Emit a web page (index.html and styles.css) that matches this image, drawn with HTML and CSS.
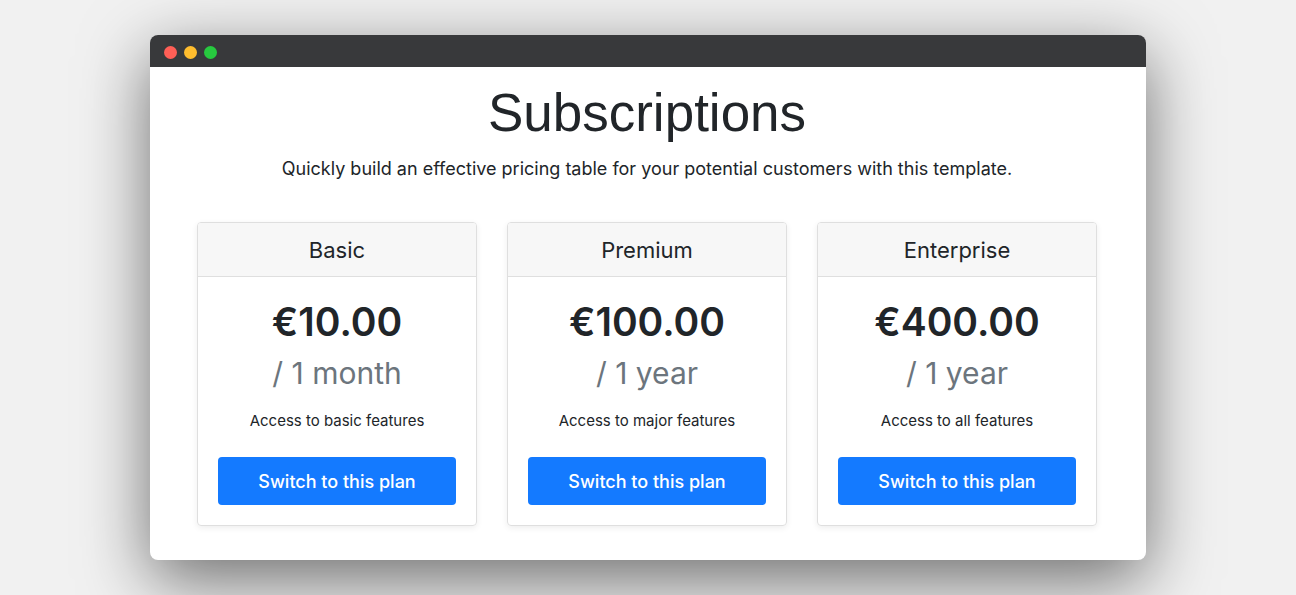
FILE: index.html
```html
<!DOCTYPE html>
<html lang="en">
<head>
<meta charset="utf-8">
<title>Subscriptions</title>
<link rel="stylesheet" href="styles.css">
</head>
<body>
<div class="window">
  <div class="titlebar">
    <span class="dot dot-close"></span>
    <span class="dot dot-minimize"></span>
    <span class="dot dot-zoom"></span>
  </div>
  <main class="content">
    <header class="intro">
      <h1 class="title">Subscriptions</h1>
      <p class="lead">Quickly build an effective pricing table for your potential customers with this template.</p>
    </header>
    <div class="plans">
      <section class="card">
        <h2 class="card-header">Basic</h2>
        <div class="card-body">
          <p class="price">€10.00</p>
          <p class="period">/ 1 month</p>
          <p class="features">Access to basic features</p>
          <button class="btn" type="button">Switch to this plan</button>
        </div>
      </section>
      <section class="card">
        <h2 class="card-header">Premium</h2>
        <div class="card-body">
          <p class="price">€100.00</p>
          <p class="period">/ 1 year</p>
          <p class="features">Access to major features</p>
          <button class="btn" type="button">Switch to this plan</button>
        </div>
      </section>
      <section class="card">
        <h2 class="card-header">Enterprise</h2>
        <div class="card-body">
          <p class="price">€400.00</p>
          <p class="period">/ 1 year</p>
          <p class="features">Access to all features</p>
          <button class="btn" type="button">Switch to this plan</button>
        </div>
      </section>
    </div>
  </main>
</div>
</body>
</html>
```
FILE: styles.css
```css
* {
  box-sizing: border-box;
}

body {
  margin: 0;
  min-height: 100vh;
  padding: 35px 150px;
  background: #f1f1f1;
  color: #212529;
  font-family: Inter, "Liberation Sans", sans-serif;
  font-size: 15px;
  line-height: 24px;
  overflow: hidden;
}

h1, h2, p {
  margin: 0;
}

.window {
  border-radius: 8px;
  background: #fff;
  box-shadow: 0 20px 68px rgba(0, 0, 0, 0.55);
}

.titlebar {
  display: flex;
  align-items: center;
  gap: 7px;
  height: 32px;
  padding: 2px 14px 0;
  border-radius: 8px 8px 0 0;
  background: #38393b;
}

.dot {
  width: 13px;
  height: 13px;
  border-radius: 50%;
}

.dot-close {
  background: #ff5f56;
}

.dot-minimize {
  background: #ffbd2e;
}

.dot-zoom {
  background: #27c93f;
}

.content {
  padding: 12px 49px 34px 47px;
}

.intro {
  margin-bottom: 38px;
  text-align: center;
}

.title {
  margin-bottom: 8px;
  font-family: "Liberation Sans", Arial, sans-serif;
  font-size: 53px;
  font-weight: 400;
  line-height: 67px;
}

.lead {
  font-size: 18px;
  line-height: 30px;
}

.plans {
  display: grid;
  grid-template-columns: repeat(3, 1fr);
  gap: 30px;
}

.card {
  border: 1px solid #dfdfdf;
  border-radius: 4px;
  box-shadow: 0 2px 6px rgba(0, 0, 0, 0.07);
  text-align: center;
}

.card-header {
  padding: 13px 20px 11px;
  border-bottom: 1px solid #dfdfdf;
  border-radius: 3px 3px 0 0;
  background: #f7f7f7;
  font-size: 22px;
  font-weight: 400;
  line-height: 29px;
}

.card-body {
  padding: 20px;
}

.price {
  font-size: 39px;
  font-weight: 600;
  line-height: 50px;
}

.period {
  margin-bottom: 10px;
  color: #6c757d;
  font-size: 30px;
  line-height: 52px;
}

.features {
  margin-bottom: 24px;
}

.btn {
  width: 100%;
  padding: 10px 16px 8px;
  border: 0;
  border-radius: 4px;
  background: #147aff;
  color: #fff;
  font-family: inherit;
  font-size: 18px;
  font-weight: 500;
  line-height: 30px;
}
```
